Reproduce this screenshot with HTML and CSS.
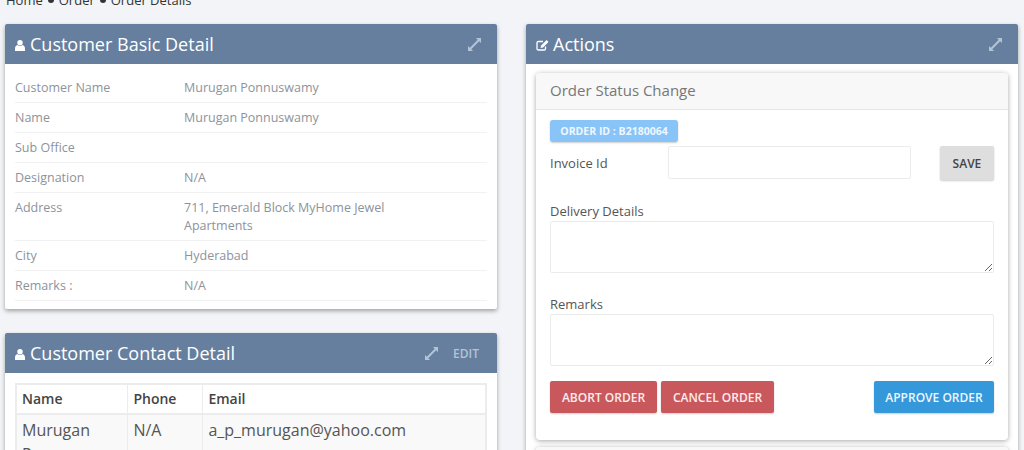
FILE: index.html
```html
<!DOCTYPE html>
<html lang="en">
<head>
<meta charset="utf-8">
<title>Order Details</title>
<link rel="stylesheet" href="styles.css">
</head>
<body>
<div class="page">
  <div class="breadcrumb"><span>Home</span><i class="dot"></i><span>Order</span><i class="dot"></i><span>Order Details</span></div>
  <div class="columns">
    <div class="col">
      <section class="panel basic">
        <header class="panel-head">
          <h2><svg class="ico" viewBox="0 0 11 12"><circle cx="5.5" cy="3" r="3"/><path d="M0 12V9.2C0 7.2 1.2 5.8 2.6 5.4 3.4 6.2 4.4 6.6 5.5 6.6S7.6 6.2 8.4 5.4C9.800 5.800 11 7.200 11 9.200V12Z"/></svg>Customer Basic Detail</h2>
          <div class="tools"><svg class="expand" viewBox="0 0 14 14"><path d="M8.500 0H14V5.500L12 3.500 3.500 12 5.500 14H0V8.500L2 10.500 10.500 2Z"/></svg></div>
        </header>
        <div class="panel-body">
          <div class="row"><div class="k">Customer Name</div><div class="v">Murugan Ponnuswamy</div></div>
          <div class="row"><div class="k">Name</div><div class="v">Murugan Ponnuswamy</div></div>
          <div class="row"><div class="k">Sub Office</div><div class="v"></div></div>
          <div class="row"><div class="k">Designation</div><div class="v">N/A</div></div>
          <div class="row"><div class="k">Address</div><div class="v">711, Emerald Block MyHome Jewel Apartments</div></div>
          <div class="row"><div class="k">City</div><div class="v">Hyderabad</div></div>
          <div class="row"><div class="k">Remarks :</div><div class="v">N/A</div></div>
        </div>
      </section>
      <section class="panel contact">
        <header class="panel-head">
          <h2><svg class="ico" viewBox="0 0 11 12"><circle cx="5.5" cy="3" r="3"/><path d="M0 12V9.2C0 7.2 1.2 5.8 2.6 5.4 3.4 6.2 4.4 6.6 5.5 6.6S7.6 6.2 8.4 5.4C9.800 5.800 11 7.200 11 9.200V12Z"/></svg>Customer Contact Detail</h2>
          <div class="tools"><svg class="expand" viewBox="0 0 14 14"><path d="M8.500 0H14V5.500L12 3.500 3.500 12 5.500 14H0V8.500L2 10.500 10.500 2Z"/></svg><span class="edit">EDIT</span></div>
        </header>
        <div class="panel-body table-wrap">
          <table>
            <thead><tr><th class="c1">Name</th><th class="c2">Phone</th><th>Email</th></tr></thead>
            <tbody><tr><td>Murugan Ponnuswamy</td><td>N/A</td><td>a_p_murugan@yahoo.com</td></tr></tbody>
          </table>
        </div>
      </section>
    </div>
    <div class="col">
      <section class="panel">
        <header class="panel-head">
          <h2><svg class="ico edit-ico" viewBox="0 0 13 12"><path d="M9.500 7.500V9.800C9.500 10.500 9 11 8.300 11H2.200C1.500 11 1 10.500 1 9.800V3.700C1 3 1.500 2.500 2.200 2.500H7" fill="none" stroke="#fff" stroke-width="1.300"/><path d="M10.600 1 12.500 2.900 7 8.400 4.500 9 5.100 6.500Z"/></svg>Actions</h2>
          <div class="tools"><svg class="expand" viewBox="0 0 14 14"><path d="M8.500 0H14V5.500L12 3.500 3.500 12 5.500 14H0V8.500L2 10.500 10.500 2Z"/></svg></div>
        </header>
        <div class="panel-body actions">
          <div class="card">
            <div class="card-head">Order Status Change</div>
            <div class="card-body">
              <span class="badge">ORDER ID : B2180064</span>
              <div class="invoice">
                <label class="inv-label" for="inv">Invoice Id</label>
                <input id="inv" class="input" type="text">
                <button class="btn save" type="button">SAVE</button>
              </div>
              <label class="field-label first" for="del">Delivery Details</label>
              <textarea id="del" class="area"></textarea>
              <label class="field-label" for="rem">Remarks</label>
              <textarea id="rem" class="area"></textarea>
              <div class="buttons">
                <button class="btn red" type="button">ABORT ORDER</button>
                <button class="btn red" type="button">CANCEL ORDER</button>
                <button class="btn blue" type="button">APPROVE ORDER</button>
              </div>
            </div>
          </div>
          <div class="card next"><div class="card-head"></div></div>
        </div>
      </section>
    </div>
  </div>
</div>
</body>
</html>
```
FILE: styles.css
```css
* { box-sizing: border-box; }
html, body { margin: 0; height: 450px; overflow: hidden; }
body {
  background: #f2f4f8;
  font-family: "Open Sans", "Noto Sans", sans-serif;
  color: #555;
}
.page { padding: 0 6px 0 5px; margin-top: -9px; }
.breadcrumb {
  display: flex;
  align-items: center;
  height: 33px;
  padding-bottom: 15px;
  padding-left: 1px;
  font-size: 13px;
  line-height: 18px;
  color: #333;
  gap: 5px;
}
.dot { width: 6px; height: 6px; border-radius: 50%; background: #333; }
.columns { display: grid; grid-template-columns: 492px 492px; column-gap: 29px; align-items: start; }
.panel { background: #fff; border-radius: 2px; box-shadow: 0 2px 4px rgba(0,0,0,.35); }
.panel-head {
  display: flex;
  align-items: center;
  justify-content: space-between;
  height: 40px;
  padding: 0 16px 0 10px;
  background: #667f9f;
  border-radius: 2px 2px 0 0;
}
.panel-head h2 {
  display: flex;
  align-items: center;
  margin: 0;
  font-size: 18px;
  font-weight: 400;
  color: #fff;
}
.ico { width: 10px; height: 11px; fill: #fff; margin-right: 5px; margin-top: 2px; }
.edit-ico { width: 13px; height: 12px; margin-right: 4px; }
.tools { display: flex; align-items: center; color: #b4c3d6; }
.expand { width: 13px; height: 13px; fill: #b4c3d6; }
.edit { font-size: 12px; font-weight: 600; margin-left: 15px; margin-right: 2px; }
.basic { height: 285px; }
.panel-body { padding: 9px 10px; }
.row {
  display: flex;
  min-height: 30px;
  padding: 6px 0 5px;
  border-bottom: 1px solid #f1f1f1;
  font-size: 12.500px;
  line-height: 18px;
  color: #8d939b;
}
.k { width: 169px; flex: none; }
.v { width: 230px; }
.contact { margin-top: 24px; }
.table-wrap { padding-top: 10px; }
table { width: 100%; border-collapse: collapse; border: 2px solid #ececec; }
th, td { border: 1px solid #ececec; padding: 5px; text-align: left; vertical-align: top; }
th { font-size: 14px; font-weight: 600; line-height: 18px; color: #444; padding: 5px; background: #fff; border-bottom-width: 2px; }
td { font-size: 16px; line-height: 24px; background: #f9f9f9; color: #555; padding-top: 3px; }
.c1 { width: 107px; }
.c2 { width: 75px; }
.actions { padding: 9px 10px; }
.card { background: #fff; border-radius: 4px; box-shadow: 0 1px 5px rgba(0,0,0,.35); }
.card-head {
  height: 37px;
  padding: 0 14px;
  background: #f8f8f8;
  border-bottom: 1px solid #e5e5e5;
  font-size: 15px;
  line-height: 35px;
  color: #777;
  border-radius: 4px 4px 0 0;
}
.card-body { padding: 10px 14px 27px; }
.badge {
  display: block;
  width: 128px;
  height: 22px;
  background: #88c4f8;
  border-radius: 3px;
  box-shadow: 0 1px 2px rgba(0,0,0,.2);
  font-size: 10.500px;
  font-weight: 700;
  line-height: 22px;
  text-align: center;
  color: #eef7ff;
}
.invoice { display: flex; align-items: flex-start; margin-top: 4px; }
.inv-label { width: 118px; flex: none; font-size: 13px; line-height: 34px; color: #555; }
.input { width: 247px; height: 33px; border: 1px solid #ececec; border-radius: 2px; background: #fff; outline: none; }
.btn {
  border: 0;
  border-radius: 2px;
  font-family: inherit;
  font-size: 12px;
  font-weight: 600;
  height: 32px;
  box-shadow: 0 1px 2px rgba(0,0,0,.2);
  padding: 0;
}
.save { width: 55px; height: 34px; margin-left: 29px; background: #dedede; color: #444; }
.field-label { display: block; font-size: 13px; line-height: 18px; color: #555; }
.first { margin-top: 22px; }
.area {
  display: block;
  width: 444px;
  height: 52px;
  margin: 1px 0 22px;
  border: 1px solid #ececec;
  border-radius: 2px;
  background: #fff;
  outline: none;
}
.buttons { display: flex; gap: 4px; margin-top: -7px; }
.red { width: 107px; background: #c9585d; color: #fdecec; }
.red + .red { width: 113px; }
.blue { width: 120px; margin-left: auto; background: #3498db; color: #eef7ff; }
.next { margin-top: 7px; }
```
